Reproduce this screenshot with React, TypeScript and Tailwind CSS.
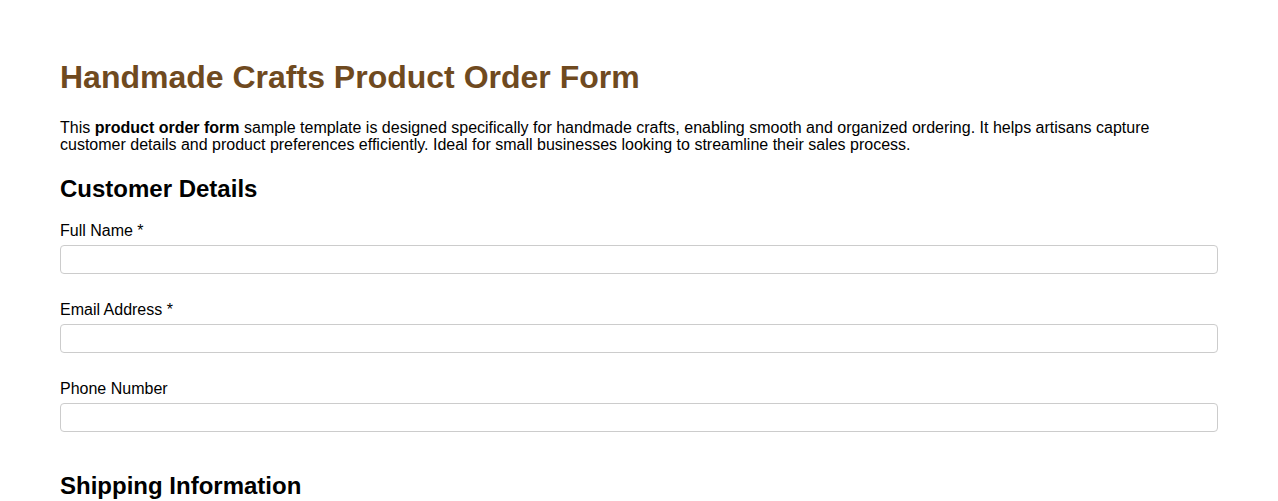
import React from "react";

function Field({ label, type = "text" }: { label: string; type?: string }) {
  return (
    <div className="flex flex-col mb-[26.6px]">
      <label className="text-[16px] leading-[18.4px] mb-[5px] text-black">{label}</label>
      <input
        type={type}
        className="h-[29px] w-full border border-[#cccccc] rounded-[4px] px-2 bg-white outline-none"
      />
    </div>
  );
}

export default function App() {
  return (
    <div
      className="bg-white min-h-[501px] px-[60px] pt-[59px] text-black"
      style={{ fontFamily: '"Liberation Sans", Arial, sans-serif' }}
    >
      <h1 className="text-[32px] leading-[36.8px] font-bold text-[#6f4a1f]">
        Handmade Crafts Product Order Form
      </h1>
      <p className="text-[16px] leading-[17px] mt-[23px]">
        This <strong className="font-bold">product order form</strong> sample template is designed specifically for
        handmade crafts, enabling smooth and organized ordering. It helps artisans capture customer details and
        product preferences efficiently. Ideal for small businesses looking to streamline their sales process.
      </p>
      <h2 className="text-[24px] leading-[27.6px] font-bold mt-[22px] mb-[19.5px]">Customer Details</h2>
      <Field label="Full Name *" />
      <Field label="Email Address *" type="email" />
      <Field label="Phone Number" type="tel" />
      <h2 className="text-[24px] leading-[27.6px] font-bold mt-[40px]">Shipping Information</h2>
    </div>
  );
}
